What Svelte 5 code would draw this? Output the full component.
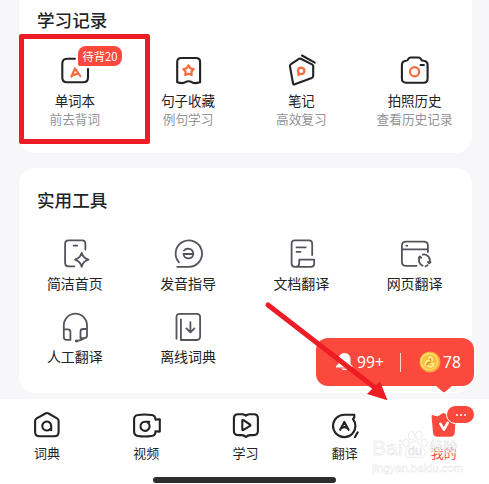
<script>
  const records = [
    { icon: 'word', name: '单词本', hint: '前去背词', badge: '待背20' },
    { icon: 'star', name: '句子收藏', hint: '例句学习' },
    { icon: 'note', name: '笔记', hint: '高效复习' },
    { icon: 'camera', name: '拍照历史', hint: '查看历史记录' }
  ];
  const tools = [
    { icon: 'phone', name: '简洁首页' },
    { icon: 'speak', name: '发音指导' },
    { icon: 'doc', name: '文档翻译' },
    { icon: 'web', name: '网页翻译' },
    { icon: 'headset', name: '人工翻译' },
    { icon: 'offline', name: '离线词典' }
  ];
  const tabs = [
    { icon: 'home', name: '词典' },
    { icon: 'video', name: '视频' },
    { icon: 'study', name: '学习' },
    { icon: 'translate', name: '翻译' },
    { icon: 'mine', name: '我的', active: true }
  ];
</script>

{#snippet glyph(name)}
  <svg class="icon" viewBox="0 0 32 32" width="32" height="32">
    {#if name === 'word'}
      <path d="M14.9 4.7H7Q2.3 4.7 2.3 9.5V23.5Q2.3 28.3 7 28.3H23.3Q28 28.3 28 23.5V15" />
      <path class="accent" d="M11.4 22.6L15 14.4L20.2 22M12.4 21.5L18.3 19.4" />
    {:else if name === 'star'}
      <path d="M4.2 8Q4.2 4 8.2 4H23.1Q27.1 4 27.1 8V28.3Q21 30 19 28.2Q15.6 26.4 12.3 28.2Q10 30 4.2 28.3Z" />
      <path class="accent" d="M15.5 11.3L17.3 14.3L20.6 15L18.4 17.7L18.7 21.1L15.5 19.8L12.3 21.1L12.6 17.7L10.4 15L13.7 14.3Z" />
    {:else if name === 'note'}
      <path d="M13.3 4.7L5 10.2Q3.7 11 4 12.6L7 29.3Q7.3 30.8 8.8 30.2L25.7 24Q27.2 23.4 27.2 21.8V12.3Q27.2 11 26 10.4L14.8 4.7Q14 4.3 13.3 4.7ZM16 1.5L28.8 8.6" />
      <path class="accent" d="M12.6 21.2L12 16.6Q12.3 13.8 15 13.7Q18.4 14 18.4 17Q18.1 20.1 15.2 20.2Q13.3 20 12.3 18.8" />
    {:else if name === 'camera'}
      <path d="M7.2 6.7Q8.6 6.7 9.6 4.6Q10.2 3.5 11.5 3.5H19.7Q21 3.5 21.7 4.8Q22.5 6.7 24.4 6.7Q28.6 6.9 28.6 11V24.4Q28.6 28.7 24.4 28.7H7.2Q2.9 28.7 2.9 24.4V11Q2.9 6.9 7.2 6.7ZM21.6 11H24.9" />
      <circle class="accent" cx="15.6" cy="17.7" r="4.6" />
    {:else if name === 'phone'}
      <path d="M14.4 28.3H8.5Q5.1 28.3 5.1 25V5.7Q5.1 2.3 8.5 2.3H22Q25.4 2.3 25.4 5.7V11.5M13.6 7.6H17.3" />
      <path d="M21.7 14.8Q23 20 28.5 21.7Q23 23.3 21.7 28.8Q20.2 23.3 15 21.7Q20.2 20 21.7 14.8Z" />
    {:else if name === 'speak'}
      <path d="M5.9 24.3A13.2 13.2 0 1 1 15.7 28.8H4.2" />
      <path d="M11 12.5C13 9.8 20.2 10 20.3 16C20.3 21.8 10.6 21.8 10.6 16H20" />
    {:else if name === 'doc'}
      <path d="M12 28.8H9Q5.6 28.8 5.6 25.5V5.8Q5.6 2.3 9 2.3H22.8Q26.2 2.3 26.2 5.8V17M13.2 21.7H28.2V25.5Q28.2 28.8 25 28.8H9.7Q13.2 28.5 13.2 25.5ZM10.5 9.3H19.8M10.5 13.8H14.5" />
    {:else if name === 'web'}
      <path d="M17.6 27.8H7Q2.9 27.8 2.9 24V7.5Q2.9 3.7 7 3.7H24.8Q28.9 3.7 28.9 7.5V14M3 11.3H28.8M7.3 7.7H8.2" />
      <path d="M23.6 27.6A6 6 0 0 1 21 18.6M23.7 16.6A6 6 0 0 1 30.2 25.2M28.6 27.2Q27.700 28 26.5 28.3M19.8 19.6L21 18.4L22.2 19.8M29 23.9L30.2 25.3L31.5 24" />
    {:else if name === 'headset'}
      <path d="M3.8 26V14.3A11.6 11.6 0 0 1 27 14.3V24.5Q27 27.2 24 27.2H20.5V20.5Q20.5 18 23.2 18H27M3.8 18.3H7.8Q10.4 18.3 10.4 20.8V28.8H6.6Q3.8 28.8 3.8 26M24 27.6Q21 29.8 16.5 30" />
      <circle class="dot" cx="16.4" cy="30" r="1.6" />
    {:else if name === 'offline'}
      <path d="M3.5 27.8V6Q3.5 2.8 6.8 2.8H23.8Q27.1 2.8 27.1 6V25.8Q27.1 29 23.8 29H7.9V8.5M17.4 11.2V21M13.4 17.4L17.4 21.4L21.4 17.4" />
    {:else if name === 'home'}
      <path d="M14.4 3.5Q16 2.6 17.6 3.5L26 8.3Q27.6 9.3 27.6 11V22Q27.6 26.3 23.3 26.3H8.5Q4.1 26.3 4.1 22V11Q4.1 9.3 5.7 8.3Z" />
      <path d="M20.2 20.2L18.9 19.2A4.5 4.5 0 1 1 20.2 16V20.2" />
    {:else if name === 'video'}
      <path d="M8 5Q14.5 4 21.5 5Q25.500 5.500 25.5 9.6L29.8 9.2V21.6L25.5 21.2Q25.5 25.6 21.5 26Q14.5 27 8 26Q4.1 25.4 4.1 21.5V9.5Q4.1 5.4 8 5Z" />
      <path d="M15 11.7H19.3L18 12.8A4.6 4.6 0 1 1 15 11.7" />
    {:else if name === 'study'}
      <path d="M8 4.2H12.6Q14.5 4.4 15.900 5.700Q17.300 4.400 19.200 4.200H23.8Q27.9 4.2 27.9 8.3V21Q27.9 25.100 23.8 25.100H20Q17.600 25.200 15.9 27Q14.2 25.200 11.800 25.100H8Q3.9 25.100 3.9 21V8.3Q3.900 4.200 8 4.200Z" />
      <path d="M12.3 10.7V19.3Q12.4 20.5 13.5 19.9L20 15.9Q21 15.2 20 14.5L13.5 10.2Q12.4 9.6 12.3 10.7Z" />
    {:else if name === 'translate'}
      <path d="M15.2 4.7H25.3V7.5L24 9Q26.4 12 26.4 16A11.2 11.2 0 1 1 15.2 4.7M28.7 22.3L26 27" />
      <path d="M11.200 19.800L15.3 11.900L19.600 19.800M12.8 17.900Q15.4 16.4 18 17.8" />
    {:else if name === 'mine'}
      <path class="solid" d="M3.6 6.7Q3.2 4.5 5.4 5.2L9.6 6.5L14.2 3.6Q16 2.4 17.6 4L20 6.7H27.6L26.8 22.6Q26.4 26.8 22.2 26.8H9.7Q5.4 26.8 5 22.5Z" />
      <path class="white" d="M12.4 13.8L15.9 19.6L19.7 12.8" />
    {/if}
  </svg>
{/snippet}

<div class="screen">
  <main>
    <section class="card records">
      <h2>学习记录</h2>
      <div class="grid">
        {#each records as item}
          <div class="item">
            {@render glyph(item.icon)}
            {#if item.badge}<span class="badge">{item.badge}</span>{/if}
            <span class="name">{item.name}</span>
            <span class="hint">{item.hint}</span>
          </div>
        {/each}
      </div>
      <div class="frame"></div>
    </section>

    <section class="card tools">
      <h2>实用工具</h2>
      <div class="grid">
        {#each tools as item}
          <div class="item">
            {@render glyph(item.icon)}
            <span class="name">{item.name}</span>
          </div>
        {/each}
      </div>
    </section>
  </main>

  <nav>
    <div class="tabs">
      {#each tabs as tab}
        <div class="tab" class:active={tab.active}>
          {@render glyph(tab.icon)}
          {#if tab.active}<span class="more"><i></i><i></i><i></i></span>{/if}
          <span>{tab.name}</span>
        </div>
      {/each}
    </div>
    <div class="handle"></div>
  </nav>

  <div class="bubble">
    <svg class="bell" viewBox="0 0 18 18" width="18" height="18">
      <path d="M9.500 0C5.500 0 3.500 3 3.500 6.500V11L1 13V14.500H17.500V13L15.500 11V6.500C15.500 3 13.500 0 9.500 0ZM6 15.500Q9.500 19 13 15.500Z" fill="#fff" />
    </svg>
    <span class="count">99+</span>
    <span class="rule"></span>
    <svg class="coin" viewBox="0 0 22 22" width="22" height="22">
      <circle cx="11" cy="11" r="10.5" fill="#f3a83a" />
      <circle cx="10.3" cy="10.6" r="9.2" fill="#ffdc62" />
      <circle cx="10.6" cy="10.8" r="7.4" fill="#f9bd40" />
      <path d="M6.5 14.5Q6 10.5 9.8 9.5M10 6.5Q14 5.5 13 9.5M12.5 12.5Q15.5 12 14 15Q11 17 9 14.5" fill="none" stroke="#ffe98c" stroke-width="2" stroke-linecap="round" />
      <path d="M7.8 14.3Q8 11.5 11 11.2M11.3 8.2L12 9.2" fill="none" stroke="#d98425" stroke-width="1.1" stroke-linecap="round" />
    </svg>
    <span class="count">78</span>
    <svg class="tail" viewBox="0 0 18 8" width="18" height="8"><path d="M0 0H18L10.5 6.6Q9 8 7.5 6.6Z" fill="#fc493d" /></svg>
  </div>

  <svg class="pointer" viewBox="0 0 130 106" width="130" height="106">
    <path d="M4 6L110 88" stroke="#ee1c24" stroke-width="5" stroke-linecap="round" />
    <path d="M123.500 101.200L103 95L108.500 89.500L112.500 86L116 82.500Z" fill="#ee1c24" />
  </svg>

  <div class="watermark">
    <div class="brand">
      <span>Bai</span>
      <svg viewBox="0 0 26 29" width="26" height="29">
        <ellipse cx="3.800" cy="13" rx="2.900" ry="3.800" />
        <ellipse cx="9.500" cy="5.500" rx="3" ry="4.200" />
        <ellipse cx="16.800" cy="5.500" rx="3" ry="4.200" />
        <ellipse cx="22.200" cy="12.500" rx="2.900" ry="3.800" />
        <path d="M13 11C8.500 11 8.500 15.500 5 18.500C1 22 3.500 28 8.500 27.500Q13 26.500 17.500 27.500C23 28 25 22 21 18.500C17.500 15.500 17.500 11 13 11Z" />
        <text x="13" y="25" text-anchor="middle">du</text>
      </svg>
      <span class="cn">经验</span>
    </div>
    <div class="site">jingyan.baidu.com</div>
  </div>
</div>

<style>
  :global(body) { margin: 0; }
  .screen {
    position: relative;
    display: flex;
    flex-direction: column;
    width: 489px;
    height: 484px;
    overflow: hidden;
    background: #f7f7fa;
    color: #222326;
    font-family: "Noto Sans CJK SC", "Noto Sans", sans-serif;
  }
  main {
    display: flex;
    flex-direction: column;
    gap: 15px;
    height: 399px;
    padding: 0 17px 0 19px;
    box-sizing: border-box;
  }
  .card {
    position: relative;
    box-sizing: border-box;
    background: #fff;
    border-radius: 16px;
  }
  .records { height: 153px; padding-top: 7px; border-radius: 0 0 16px 16px; }
  .tools { height: 225px; padding-top: 19px; }
  h2 {
    margin: 0 0 0 18px;
    height: 26px;
    font-size: 17.6px;
    line-height: 26px;
    font-weight: 500;
  }
  .grid { display: grid; grid-template-columns: repeat(4, 1fr); }
  .records .grid { padding-top: 21px; }
  .tools .grid { padding-top: 25px; row-gap: 17px; }
  .item {
    position: relative;
    display: flex;
    flex-direction: column;
    align-items: center;
    white-space: nowrap;
  }
  .icon {
    display: block;
    overflow: visible;
    fill: none;
    stroke: #222326;
    stroke-width: 2.1;
    stroke-linecap: round;
    stroke-linejoin: round;
  }
  .tools .icon { stroke: #53545c; stroke-width: 1.8; }
  .icon .accent { stroke: #f76b3c; stroke-width: 2.2; }
  .icon .dot { fill: #53545c; stroke: none; }
  .icon .solid { fill: #fc493d; stroke: none; }
  .icon .white { stroke: #fff; stroke-width: 2.6; }
  .name { margin-right: 1.5px; font-size: 13.5px; line-height: 20px; }
  .records .name { margin-top: 4px; }
  .tools .name { margin-top: 3px; font-size: 14px; }
  .tools .item { height: 56px; }
  .hint { margin-right: 1.5px; font-size: 12.7px; line-height: 18px; color: #929399; }
  .badge {
    position: absolute;
    left: 59px;
    top: -8px;
    width: 44px;
    height: 20px;
    border-radius: 8px 8px 8px 2px;
    background: #fc493d;
    color: #fff;
    font-size: 11.3px;
    line-height: 20px;
    text-align: center;
  }
  .frame {
    position: absolute;
    left: 0;
    top: 34px;
    width: 131px;
    height: 110px;
    box-sizing: border-box;
    border: 5px solid #ee1c24;
    border-radius: 2px;
  }
  nav {
    display: flex;
    flex-direction: column;
    align-items: center;
    height: 85px;
    background: #fff;
  }
  .tabs {
    display: grid;
    grid-template-columns: repeat(5, 99.2px);
    height: 78px;
    margin-left: 2px;
  }
  .tab {
    position: relative;
    display: flex;
    flex-direction: column;
    align-items: center;
    padding-top: 11px;
    font-size: 13px;
    line-height: 20px;
  }
  .tab > span:last-child { margin-top: 1px; }
  .active { color: #fc493d; }
  .more {
    position: absolute;
    left: 52px;
    top: 6px;
    display: flex;
    align-items: center;
    justify-content: center;
    gap: 2px;
    width: 29px;
    height: 19px;
    box-sizing: border-box;
    border: 1px solid #fff;
    border-radius: 10px;
    background: #fc493d;
  }
  .more i { width: 2px; height: 2px; border-radius: 1px; background: #fff; }
  .handle { width: 183px; height: 6px; border-radius: 3px; background: #2e2e2e; }
  .bubble {
    position: absolute;
    left: 316px;
    top: 338px;
    display: flex;
    align-items: center;
    width: 158px;
    height: 48px;
    box-sizing: border-box;
    padding-left: 19px;
    border-radius: 12px;
    background: #fc493d;
    color: #fff;
    font: 15.7px "Noto Sans", sans-serif;
  }
  .count { margin-left: 4px; }
  .coin + .count { margin-left: 2px; }
  .rule { width: 1px; height: 19px; margin: 0 18px 0 16px; background: #ffd5d1; }
  .tail { position: absolute; left: 119px; top: 47px; }
  .pointer { position: absolute; left: 264px; top: 299px; fill: none; }
  .watermark {
    position: absolute;
    left: 372px;
    top: 429px;
    color: rgb(255 255 255 / 0.75);
    font-family: "Liberation Sans", sans-serif;
    -webkit-text-stroke: 0.5px #e2e2e5;
  }
  .brand { display: flex; align-items: flex-end; height: 30px; font-size: 21px; line-height: 23px; }
  .brand svg { fill: rgb(255 255 255 / 0.6); stroke: #e2e2e5; stroke-width: 0.7; }
  .brand text { font-size: 12.5px; }
  .brand .cn { margin-left: 1px; font: 14px/26px "Noto Sans CJK SC", sans-serif; }
  .site {
    margin-top: 2px;
    font-size: 11.5px;
    line-height: 14px;
    letter-spacing: -0.1px;
    -webkit-text-stroke: 0.4px #e6e6e9;
  }
</style>
